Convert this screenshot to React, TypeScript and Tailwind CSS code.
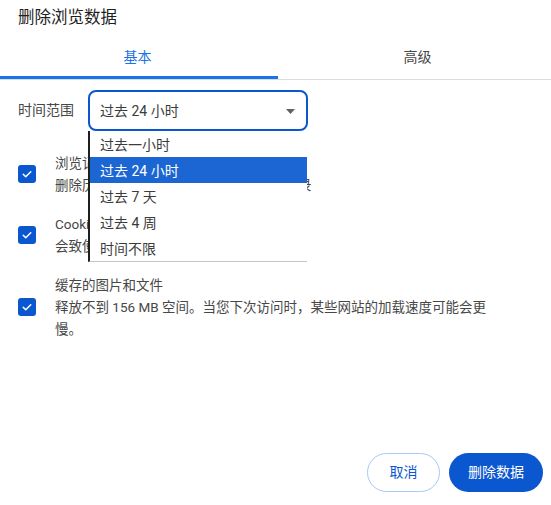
import React, { useState } from "react";

const FONT = { fontFamily: 'Roboto, "Noto Sans CJK SC", sans-serif' };

const RANGES = ["过去一小时", "过去 24 小时", "过去 7 天", "过去 4 周", "时间不限"];

function Checkbox() {
  return (
    <span className="w-[18px] h-[18px] shrink-0 rounded-[3px] bg-[#0b57d0] flex items-center justify-center">
      <svg className="w-[12px] h-[12px]" viewBox="0 0 24 24" fill="none" stroke="white" strokeWidth="3" strokeLinecap="round" strokeLinejoin="round">
        <path d="M4.5 12.5l5 5 10-10" />
      </svg>
    </span>
  );
}

function Row({ title, desc }: { title: string; desc: string }) {
  return (
    <div className="flex items-center pl-[18px]">
      <Checkbox />
      <div className="ml-[19px] max-w-[438px] text-[13.5px] leading-[22px] text-[#474747]">
        <div>{title}</div>
        <div>{desc}</div>
      </div>
    </div>
  );
}

export default function App() {
  const [selected] = useState(1);

  return (
    <div className="h-[505px] w-full bg-white flex flex-col" style={FONT}>
      <h1 className="pl-[18px] pt-[6px] text-[16.5px] leading-[24px] text-[#1f1f1f]">删除浏览数据</h1>

      {/* Tabs */}
      <div className="mt-[6px] flex border-b border-[#dadce0]">
        <div className="relative w-[278px] h-[43px] flex items-center justify-center text-[14px] text-[#1a73e8] pr-[3px]">
          基本
          <span className="absolute left-0 right-0 bottom-0 h-[3px] bg-[#1a73e8]" />
        </div>
        <div className="flex-1 h-[43px] flex items-center justify-center text-[14px] text-[#474747] pl-[6px]">
          高级
        </div>
      </div>

      {/* Time range */}
      <div className="mt-[10px] flex items-center pl-[18px]">
        <span className="w-[70px] text-[14px] text-[#474747]">时间范围</span>
        <div className="relative">
          <div className="w-[220px] h-[41px] border-2 border-[#0b57d0] rounded-[8px] flex items-center justify-between pl-[10px] pr-[11px] pt-[2px] text-[14px] text-[#3c3c3c]">
            <span>{RANGES[selected]}</span>
            <svg width="9" height="5" viewBox="0 0 9 5">
              <path d="M0 0h9L4.5 5z" fill="#5f6368" />
            </svg>
          </div>
          <ul className="absolute left-0 top-[41px] w-[219px] bg-white border-l-2 border-l-[#1f1f1f] border-b border-b-[#c4c4c4] z-10 text-[14px]">
            {RANGES.map((r, i) => (
              <li
                key={r}
                className={
                  i === selected
                    ? "h-[26px] flex items-center pl-[10px] pt-[3px] bg-[#1b66d2] text-white"
                    : "h-[26px] flex items-center pl-[10px] pt-[3px] text-[#3c3c3c]"
                }
              >
                {r}
              </li>
            ))}
          </ul>
        </div>
      </div>

      {/* Data types */}
      <div className="mt-[21px] flex flex-col gap-[17px]">
        <Row title="浏览记录" desc="删除历史记录，包括在搜索框中的历史记录" />
        <Row title="Cookie 及其他网站数据" desc="会致使您从大多数网站退出。" />
        <Row title="缓存的图片和文件" desc="释放不到 156 MB 空间。当您下次访问时，某些网站的加载速度可能会更慢。" />
      </div>

      <div className="flex-1" />

      <div className="flex justify-end gap-[9px] pr-[8px] pb-[13px]">
        <button className="w-[73px] h-[39px] rounded-full border border-[#a8c7fa] text-[14px] text-[#0b57d0] bg-white">
          取消
        </button>
        <button className="w-[94px] h-[39px] rounded-full bg-[#0b57d0] text-[14px] text-white">
          删除数据
        </button>
      </div>
    </div>
  );
}
